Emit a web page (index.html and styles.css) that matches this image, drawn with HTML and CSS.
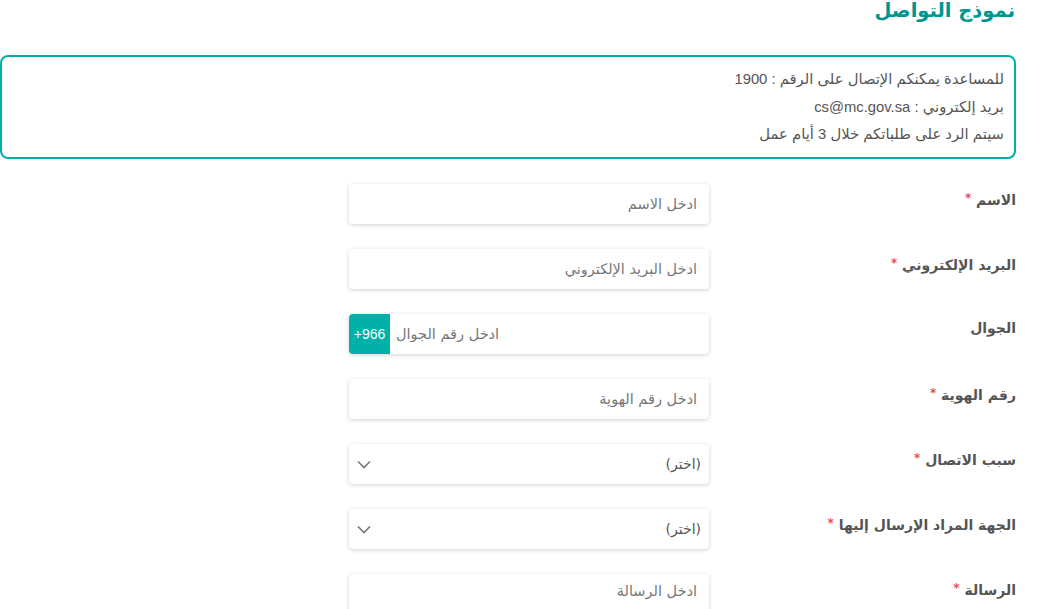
FILE: index.html
```html
<!DOCTYPE html>
<html lang="ar" dir="rtl">
<head>
<meta charset="utf-8">
<title>نموذج التواصل</title>
<link rel="stylesheet" href="styles.css">
</head>
<body>
<div class="page">
  <h1 class="title">نموذج التواصل</h1>
  <div class="info">
    <p>للمساعدة يمكنكم الإتصال على الرقم : 1900</p>
    <p>بريد إلكتروني : cs@mc.gov.sa</p>
    <p>سيتم الرد على طلباتكم خلال 3 أيام عمل</p>
  </div>
  <form class="form">
    <div class="row">
      <label class="label">الاسم <span class="req">*</span></label>
      <div class="field"><input class="input" type="text" placeholder="ادخل الاسم"></div>
    </div>
    <div class="row">
      <label class="label">البريد الإلكتروني <span class="req">*</span></label>
      <div class="field"><input class="input" type="text" placeholder="ادخل البريد الإلكتروني"></div>
    </div>
    <div class="row">
      <label class="label">الجوال</label>
      <div class="field phone">
        <span class="prefix">+966</span>
        <input class="input" type="text" placeholder="ادخل رقم الجوال">
      </div>
    </div>
    <div class="row">
      <label class="label">رقم الهوية <span class="req">*</span></label>
      <div class="field"><input class="input" type="text" placeholder="ادخل رقم الهوية"></div>
    </div>
    <div class="row">
      <label class="label">سبب الاتصال <span class="req">*</span></label>
      <div class="field select">
        <span class="sel-text">(اختر)</span>
        <svg class="chev" width="14" height="9" viewBox="0 0 14 9"><path d="M1 1.5 L7 7.5 L13 1.5" fill="none" stroke="#777" stroke-width="1.6"/></svg>
      </div>
    </div>
    <div class="row">
      <label class="label">الجهة المراد الإرسال إليها <span class="req">*</span></label>
      <div class="field select">
        <span class="sel-text">(اختر)</span>
        <svg class="chev" width="14" height="9" viewBox="0 0 14 9"><path d="M1 1.5 L7 7.5 L13 1.5" fill="none" stroke="#777" stroke-width="1.6"/></svg>
      </div>
    </div>
    <div class="row">
      <label class="label">الرسالة <span class="req">*</span></label>
      <div class="field"><textarea class="input area" placeholder="ادخل الرسالة"></textarea></div>
    </div>
  </form>
</div>
</body>
</html>
```
FILE: styles.css
```css
* { box-sizing: border-box; }
html, body { margin: 0; padding: 0; background: #fff; }
body {
  font-family: "DejaVu Sans", "Liberation Sans", sans-serif;
  color: #555;
  overflow: hidden;
}
.page {
  padding: 0 22px 0 0;
  width: 1038px;
}
.title {
  margin: 0;
  height: 55px;
  line-height: 22px;
  font-size: 19.5px;
  font-weight: bold;
  color: #00968f;
  margin-right: 1px;
}
.info {
  border: 2px solid #00b1a9;
  border-radius: 8px;
  padding: 9px 10px 10px 10px;
  margin-bottom: 25px;
  height: 104px;
  font-family: "Liberation Sans", "DejaVu Sans", sans-serif;
}
.info p {
  margin: 0;
  font-size: 14.8px;
  line-height: 27.5px;
  color: #555;
}
.form { display: flex; flex-direction: column; gap: 25px; }
.row {
  display: grid;
  grid-template-columns: 307px 360px;
  align-items: start;
}
.label {
  font-size: 14px;
  font-weight: bold;
  color: #555;
  padding-top: 4px;
  line-height: 20px;
}
.req { color: #e4505a; font-size: 12px; vertical-align: 3px; }
.field {
  height: 40px;
  background: #fff;
  border-radius: 4px;
  box-shadow: 0 1px 4px rgba(0,0,0,0.18);
  display: flex;
  align-items: center;
  overflow: hidden;
}
.input {
  border: none;
  outline: none;
  background: transparent;
  width: 100%;
  height: 100%;
  padding: 0 12px;
  font-family: "DejaVu Sans", "Liberation Sans", sans-serif;
  font-size: 14.5px;
  color: #555;
  direction: rtl;
}
.input::placeholder { color: #777; }
.area { resize: none; padding-top: 9px; height: 40px; }
.phone { direction: ltr; }
.phone .input { flex: 1; padding: 0 6px; text-align: left; }
.phone .prefix {
  flex: 0 0 41px;
  height: 100%;
  background: #00b1a9;
  color: #fff;
  font-family: "Liberation Sans", sans-serif;
  font-size: 14px;
  display: flex;
  align-items: center;
  justify-content: center;
}
.select { justify-content: space-between; padding: 0 8px 0 8px; }
.sel-text { font-size: 14px; color: #555; }
.chev { display: block; }
```
